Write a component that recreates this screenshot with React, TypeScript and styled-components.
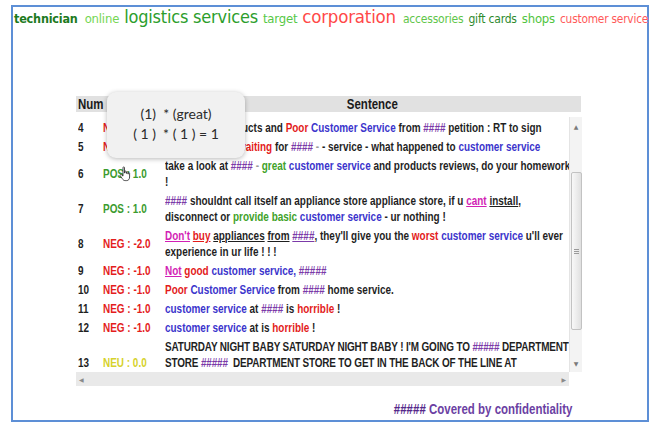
import React from "react";
import styled, { createGlobalStyle } from "styled-components";

const GlobalStyle = createGlobalStyle`
  html, body { margin: 0; padding: 0; background: #fff; }
  body { width: 650px; height: 425px; overflow: hidden; }
`;

/* narrow face: the sheet uses a condensed bold sans */
const NARROW = 0.765;

const Frame = styled.div`
  box-sizing: border-box;
  margin: 5px 0 0 11px;
  width: 638px;
  height: 417px;
  border: 2px solid #5d8fd6;
  display: flex;
  flex-direction: column;
`;

const Cloud = styled.div`
  display: flex;
  align-items: baseline;
  gap: 5px;
  height: 20px;
  line-height: 20px;
  padding-left: 1px;
  font-family: "DejaVu Sans Condensed", "DejaVu Sans", sans-serif;
  white-space: nowrap;
`;

const Tag = styled.span<{ $size: number; $color: string; $bold?: boolean; $space?: number }>`
  font-size: ${(p) => p.$size}px;
  color: ${(p) => p.$color};
  font-weight: ${(p) => (p.$bold ? 700 : 400)};
  margin-left: ${(p) => p.$space ?? 0}px;
  letter-spacing: -0.2px;
`;

const Grid = styled.div`
  position: relative;
  margin: 69px 0 0 63px;
  width: 505px;
  font-family: "Liberation Sans", Arial, sans-serif;
  font-weight: 700;
`;

const HeadRow = styled.div`
  display: grid;
  grid-template-columns: 25px 62px 1fr;
  height: 16px;
  line-height: 16px;
  background: #e1e1e1;
  font-size: 15px;
  color: #1a1a1a;
`;

const HeadCell = styled.div<{ $center?: boolean }>`
  padding-left: ${(p) => (p.$center ? 0 : 2)}px;
  text-align: ${(p) => (p.$center ? "center" : "left")};
`;

const Squeeze = styled.span<{ $origin?: string }>`
  display: inline-block;
  white-space: pre;
  transform: scaleX(${NARROW});
  transform-origin: ${(p) => p.$origin ?? "left"} center;
`;

const Body = styled.div`
  display: flex;
  margin-top: 5px;
  height: 255px;
`;

const Viewport = styled.div`
  width: 493px;
  flex: none;
  overflow: hidden;
`;

const Rows = styled.table`
  width: 493px;
  margin-top: 1px;
  border-collapse: collapse;
  table-layout: fixed;
  font-size: 13px;
  line-height: 16px;
  color: #1f1f1f;
`;

const Cell = styled.td<{ $w?: number }>`
  ${(p) => (p.$w ? `width: ${p.$w}px;` : "")}
  padding: 2px 2px 1px;
  vertical-align: middle;
  white-space: nowrap;
  overflow: hidden;
`;

const Line = styled.div<{ $tight?: boolean }>`
  width: max-content;
  letter-spacing: ${(p) => (p.$tight ? "-0.2px" : "normal")};
  transform: scaleX(${NARROW});
  transform-origin: left center;
`;

type Tone = "NEG" | "POS" | "NEU";
const toneColor: Record<Tone, string> = {
  NEG: "#e41d1d",
  POS: "#3b9b2e",
  NEU: "#d6d22c",
};

const Score = styled(Squeeze)<{ $tone: Tone }>`
  color: ${(p) => toneColor[p.$tone]};
`;

type Kind = "t" | "neg" | "pos" | "topic" | "mask" | "not" | "negu" | "und" | "masku" | "dash";

const kindColor: Record<Kind, string> = {
  t: "#1f1f1f",
  neg: "#e31b1b",
  pos: "#41a22a",
  topic: "#3b34cc",
  mask: "#7b3aa8",
  not: "#d21fb5",
  negu: "#e31b1b",
  und: "#1f1f1f",
  masku: "#7b3aa8",
  dash: "#9a9a9a",
};

const Word = styled.span<{ $kind: Kind }>`
  color: ${(p) => kindColor[p.$kind]};
  text-decoration: ${(p) =>
    ["not", "negu", "und", "masku"].includes(p.$kind) ? "underline" : "none"};
  white-space: pre;
`;

const VBar = styled.div`
  width: 12px;
  flex: none;
  display: flex;
  flex-direction: column;
  background: #f3f3f3;
  border-left: 1px solid #e4e4e4;
`;

const Arrow = styled.div`
  height: 18px;
  display: flex;
  align-items: center;
  justify-content: center;
  font-size: 6px;
  color: #7a7a7a;
  font-family: "DejaVu Sans", sans-serif;
`;

const Track = styled.div`
  flex: 1;
  display: flex;
  flex-direction: column;
  align-items: center;
`;

const Thumb = styled.div`
  box-sizing: border-box;
  margin-top: 37px;
  width: 11px;
  height: 158px;
  border: 1px solid #c2c2c2;
  border-radius: 2px;
  background: linear-gradient(to right, #f8f8f8, #e0e0e0);
  display: flex;
  align-items: center;
  justify-content: center;
`;

const Grip = styled.div`
  width: 5px;
  height: 5px;
  background: repeating-linear-gradient(to bottom, #9a9a9a 0 1px, transparent 1px 2px);
`;

const HBar = styled.div`
  width: 493px;
  height: 14px;
  background: #e9e9e9;
  display: flex;
  align-items: center;
  justify-content: space-between;
  padding: 0 3px;
  box-sizing: border-box;
  font-size: 6px;
  color: #8a8a8a;
  font-family: "DejaVu Sans", sans-serif;
`;

const Footer = styled.div`
  margin-top: 15px;
  padding-right: 9px;
  display: flex;
  justify-content: flex-end;
  font-size: 15px;
  line-height: 16px;
  color: #6b3fa3;
`;

const FooterMask = styled.span`
  color: #55288a;
`;

const Tooltip = styled.div`
  position: absolute;
  left: 31px;
  top: -4px;
  width: 138px;
  height: 66px;
  box-sizing: border-box;
  padding-top: 12px;
  border-radius: 9px;
  background: #f1f1f1;
  box-shadow: 0 1px 5px rgba(0, 0, 0, 0.28);
  font-family: Lato, "Open Sans", sans-serif;
  font-weight: 400;
  font-size: 14px;
  line-height: 20px;
  color: #2b2b2b;
  text-align: center;
`;

const Pointer = styled.svg`
  position: absolute;
  left: 43px;
  top: 70px;
`;

type Token = [Kind, string];
type Row = { n: number; tone: Tone; value: string; tight?: boolean; lines: Token[][] };

const rows: Row[] = [
  {
    n: 4,
    tone: "NEG",
    value: "-1.0",
    lines: [
      [
        ["t", "Avoid "],
        ["mask", "####"],
        ["t", " products and "],
        ["neg", "Poor"],
        ["t", " "],
        ["topic", "Customer Service"],
        ["t", " from "],
        ["mask", "####"],
        ["t", " petition : RT to sign"],
      ],
    ],
  },
  {
    n: 5,
    tone: "NEG",
    value: "-1.0",
    lines: [
      [
        ["t", "Hours on hold, "],
        ["neg", "waiting"],
        ["t", " for "],
        ["mask", "####"],
        ["dash", " - "],
        ["t", "- service - what happened to "],
        ["topic", "customer service"],
      ],
    ],
  },
  {
    n: 6,
    tone: "POS",
    value: "1.0",
    lines: [
      [
        ["t", "take a look at "],
        ["mask", "####"],
        ["dash", " - "],
        ["pos", "great"],
        ["t", " "],
        ["topic", "customer service"],
        ["t", " and products reviews, do your homework"],
      ],
      [["t", "!"]],
    ],
  },
  {
    n: 7,
    tone: "POS",
    value: "1.0",
    lines: [
      [
        ["mask", "####"],
        ["t", " shouldnt call itself an appliance store appliance store, if u "],
        ["not", "cant"],
        ["t", " "],
        ["und", "install"],
        ["t", ","],
      ],
      [
        ["t", "disconnect or "],
        ["pos", "provide basic"],
        ["t", " "],
        ["topic", "customer service"],
        ["t", " - ur nothing !"],
      ],
    ],
  },
  {
    n: 8,
    tone: "NEG",
    value: "-2.0",
    lines: [
      [
        ["not", "Don't"],
        ["t", " "],
        ["negu", "buy"],
        ["t", " "],
        ["und", "appliances"],
        ["t", " "],
        ["und", "from"],
        ["t", " "],
        ["masku", "####"],
        ["t", ", they'll give you the "],
        ["neg", "worst"],
        ["t", " "],
        ["topic", "customer service"],
        ["t", " u'll ever"],
      ],
      [["t", "experience in ur life ! ! !"]],
    ],
  },
  {
    n: 9,
    tone: "NEG",
    value: "-1.0",
    lines: [
      [
        ["not", "Not"],
        ["t", " "],
        ["neg", "good"],
        ["t", " "],
        ["topic", "customer service,"],
        ["t", " "],
        ["mask", "#####"],
      ],
    ],
  },
  {
    n: 10,
    tone: "NEG",
    value: "-1.0",
    lines: [
      [
        ["neg", "Poor"],
        ["t", " "],
        ["topic", "Customer Service"],
        ["t", " from "],
        ["mask", "####"],
        ["t", " home service."],
      ],
    ],
  },
  {
    n: 11,
    tone: "NEG",
    value: "-1.0",
    lines: [
      [
        ["topic", "customer service"],
        ["t", " at "],
        ["mask", "####"],
        ["t", " is "],
        ["neg", "horrible"],
        ["t", " !"],
      ],
    ],
  },
  {
    n: 12,
    tone: "NEG",
    value: "-1.0",
    lines: [
      [
        ["topic", "customer service"],
        ["t", " at is "],
        ["neg", "horrible"],
        ["t", " !"],
      ],
    ],
  },
  {
    n: 13,
    tone: "NEU",
    value: "0.0",
    tight: true,
    lines: [
      [
        ["t", "SATURDAY NIGHT BABY SATURDAY NIGHT BABY ! I'M GOING TO "],
        ["mask", "#####"],
        ["t", " DEPARTMENT"],
      ],
      [
        ["t", "STORE "],
        ["mask", "#####"],
        ["t", "  DEPARTMENT STORE TO GET IN THE BACK OF THE LINE AT"],
      ],
      [["t", "6AM ! ! !"]],
    ],
  },
];

const tags: { text: string; size: number; color: string; bold?: boolean; space?: number }[] = [
  { text: "technician", size: 12.5, color: "#1d7a1d", bold: true },
  { text: "online", size: 13, color: "#74d653", space: 2 },
  { text: "logistics services", size: 18, color: "#2c9e2c" },
  { text: "target", size: 13, color: "#56c846" },
  { text: "corporation", size: 18.5, color: "#ff4848" },
  { text: "accessories", size: 12, color: "#5fc64a", space: 2 },
  { text: "gift cards", size: 12, color: "#2e8a2e" },
  { text: "shops", size: 13, color: "#50c440" },
  { text: "customer service", size: 11.8, color: "#ff5858" },
];

export default function App() {
  return (
    <>
      <GlobalStyle />
      <Frame>
        <Cloud>
          {tags.map((t) => (
            <Tag key={t.text} $size={t.size} $color={t.color} $bold={t.bold} $space={t.space}>
              {t.text}
            </Tag>
          ))}
        </Cloud>
        <Grid>
          <HeadRow>
            <HeadCell>
              <Squeeze>Num</Squeeze>
            </HeadCell>
            <HeadCell $center>
              <Squeeze $origin="center">Score</Squeeze>
            </HeadCell>
            <HeadCell $center>
              <Squeeze $origin="center">Sentence</Squeeze>
            </HeadCell>
          </HeadRow>
          <Body>
            <Viewport>
              <Rows>
                <tbody>
                  {rows.map((r) => (
                    <tr key={r.n}>
                      <Cell $w={21}>
                        <Squeeze>{r.n}</Squeeze>
                      </Cell>
                      <Cell $w={58}>
                        <Score $tone={r.tone}>
                          {r.tone} : {r.value}
                        </Score>
                      </Cell>
                      <Cell>
                        {r.lines.map((line, i) => (
                          <Line key={i} $tight={r.tight}>
                            {line.map(([k, s], j) => (
                              <Word key={j} $kind={k}>
                                {s}
                              </Word>
                            ))}
                          </Line>
                        ))}
                      </Cell>
                    </tr>
                  ))}
                </tbody>
              </Rows>
            </Viewport>
            <VBar>
              <Arrow>▲</Arrow>
              <Track>
                <Thumb>
                  <Grip />
                </Thumb>
              </Track>
              <Arrow>▼</Arrow>
            </VBar>
          </Body>
          <HBar>
            <span>◀</span>
            <span>▶</span>
          </HBar>
          <Footer>
            <Squeeze $origin="right">
              <FooterMask>#####</FooterMask> Covered by confidentiality
            </Squeeze>
          </Footer>
          <Tooltip>
            <div>(1)&nbsp; * (great)</div>
            <div>( 1 )&nbsp; * ( 1 ) = 1</div>
          </Tooltip>
          <Pointer width="12" height="16" viewBox="0 0 12 16">
            <path
              d="M4 1.6c0-.9 1.5-.9 1.5 0V7h.4V5.6c0-.8 1.4-.8 1.4 0v1.8h.3V6.4c0-.8 1.4-.8 1.4 0v1.7h.2V7.3c0-.8 1.4-.8 1.4 0V11c0 2.1-1.1 3.6-3 3.6H6.2c-1.4 0-2.2-.8-2.9-1.9L1.1 9.6c-.5-.8.5-1.6 1.2-1L4 10.1Z"
              fill="#fff"
              stroke="#222"
              strokeWidth="0.8"
            />
          </Pointer>
        </Grid>
      </Frame>
    </>
  );
}
